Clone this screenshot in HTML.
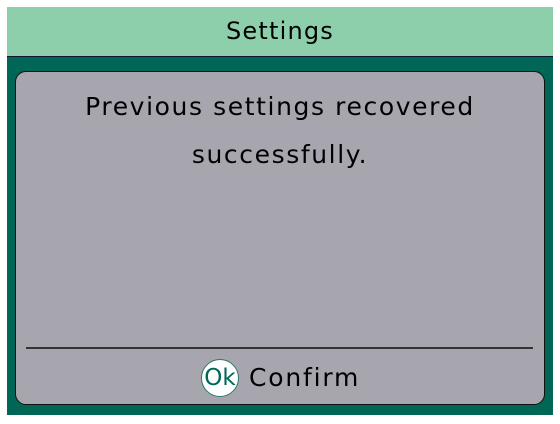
<!DOCTYPE html>
<html><head><style>
body{margin:0;width:560px;height:424px;background:#fff;position:relative;overflow:hidden;font-family:"DejaVu Sans","Liberation Sans",sans-serif;}
#title{position:absolute;left:7px;top:7px;width:546px;height:49px;background:#8ecfab;color:#000;font-size:24px;letter-spacing:1.2px;text-align:center;line-height:48px;}
#frame{position:absolute;left:7px;top:56px;width:546px;height:359px;background:#006655;border-top:1px solid #113;box-sizing:border-box;}
#panel{position:absolute;left:15px;top:71px;width:530px;height:334px;background:#a7a6ae;border:1px solid #111;border-radius:11px;box-sizing:border-box;}
#msg{position:absolute;left:0;top:83px;width:560px;text-align:center;font-size:25px;line-height:48px;letter-spacing:1.6px;color:#000;}
#sep{position:absolute;left:26px;top:347px;width:507px;height:2px;background:#333;}
#ok{position:absolute;left:201px;top:359px;width:38px;height:38px;border-radius:50%;background:#fff;border:1px solid #2a7a6a;box-sizing:border-box;color:#006655;font-size:23px;line-height:36px;text-align:center;}
#conf{position:absolute;left:249px;top:361px;font-size:25px;line-height:34px;letter-spacing:1.8px;color:#000;}
</style></head><body>
<div id="title">Settings</div>
<div id="frame"></div>
<div id="panel"></div>
<div id="msg">Previous settings recovered<br>successfully.</div>
<div id="sep"></div>
<div id="ok">Ok</div>
<div id="conf">Confirm</div>
</body></html>
